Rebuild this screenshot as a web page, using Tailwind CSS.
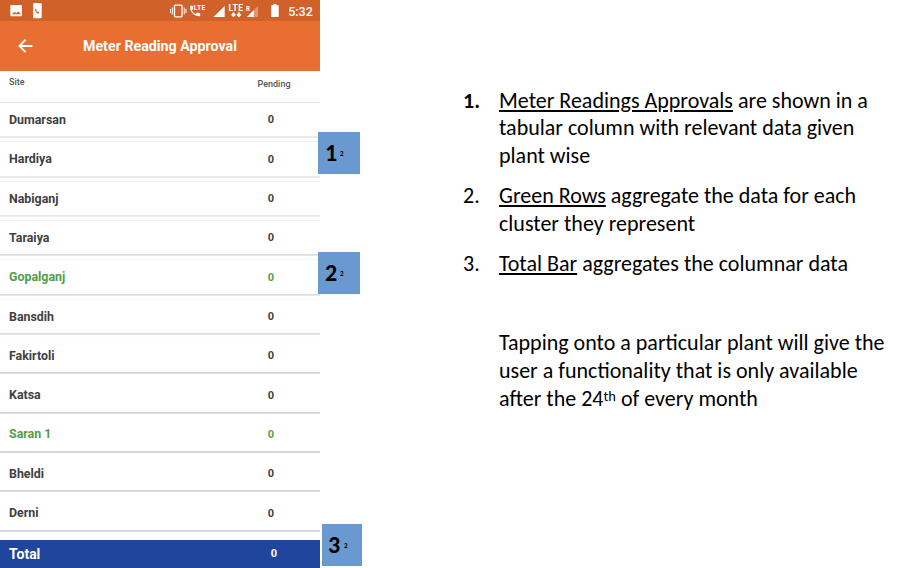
<!DOCTYPE html>
<html lang="en"><head><meta charset="utf-8"><title>Meter Reading Approval</title>
<script src="https://cdn.jsdelivr.net/npm/@tailwindcss/browser@4"></script></head>
<body class="bg-white">
<main class="relative flex h-[568px] w-[904px] overflow-hidden bg-white">
<section class="flex w-[320px] shrink-0 flex-col font-['Roboto',sans-serif] text-[#414141]">
<div class="h-[21px] shrink-0 bg-[#d06229]">
<svg class="block" width="320" height="21" viewBox="0 0 320 21" fill="#fff">
<rect x="10.3" y="5" width="11.7" height="11.3" rx="1.3"/><path d="M12 14.3l2.5-2.6 1.8 1.5 2-2 2.5 3.1z" fill="#d06229"/>
<rect x="33" y="3" width="8.7" height="15.3" rx="1.2"/><path d="M35.1 8.7l1.2.2.3 1.5-.3.7 1.3 1 .8-.4 1 .9-.6 1c-2.3-.1-4.1-2.4-3.7-4.9z" fill="#d06229"/>
<g fill="none" stroke="#fff"><rect x="174.5" y="5.2" width="7.5" height="11.7" rx=".8" stroke-width="1.3"/><path d="M172.3 7.5v7M170.5 9v4M184.2 7.5v7M186 9v4" stroke-width="1"/></g>
<path d="M190 5.7h2.7l.6 3-1.5 1.5c.9 1.7 2.2 3 3.9 3.9l1.5-1.5 3 .6v3c-6.2.2-10.7-4.7-10.2-10.5z"/>
<text x="193.8" y="10" font-size="6.7" font-weight="700" textLength="11.5">LTE</text>
<path d="M213.5 17L224.7 6v11z"/>
<text x="228.5" y="11.2" font-size="8.5" font-weight="700" textLength="14.5">LTE</text>
<path d="M233.5 11.8l2.4 3.2-2.4 2.3-2.4-2.3zM238.9 11.8l2.4 3.2-2.4 2.3-2.4-2.3z"/>
<text x="246" y="11" font-size="6.3" font-weight="700">R</text>
<path d="M247 17L258 6v11z" opacity=".35"/><path d="M247 17l6.7-6.7V17z"/>
<path d="M273.3 4h3.2v1.3h2.2V17h-7.5V5.3h2.1z"/>
<text x="288.3" y="15.5" font-size="12.5" font-weight="500" textLength="24.5">5:32</text>
</svg></div>
<header class="flex h-[50px] shrink-0 items-center bg-[#e86f31] pl-[18px] text-white">
<svg width="15" height="14" viewBox="0 0 15 14" fill="none" stroke="#fff" stroke-width="1.8"><path d="M7.6.7L1.4 7l6.2 6.2M1.4 7h13"/></svg>
<h1 class="ml-[50px] pt-[2px] text-[14.2px] font-bold tracking-[.02px] whitespace-nowrap">Meter Reading Approval</h1></header>
<div class="flex h-[27px] shrink-0 text-[9px] leading-[11px] font-medium text-[#555]"><span class="w-[229px] pt-[6px] pl-[9px]">Site</span><span class="w-[90px] pt-[8px] text-center">Pending</span></div>
<div id="rows" class="h-[433px] shrink-0"></div>
<div class="flex h-[37px] shrink-0 flex-col"><div class="mt-[9px] flex h-[28px] shrink-0 items-center bg-[#20459c] pt-px font-bold text-white"><span class="w-[229px] pl-[9px] text-[14px]">Total</span><span class="w-[90px] text-center text-[11px]">0</span></div></div>
</section>
<article class="pt-[86.6px] pl-[143px] font-['Carlito','Calibri','Lato',sans-serif] text-[22px] leading-[27.8px] whitespace-nowrap text-black">
<ol>
<li class="flex"><span class="w-[36px] shrink-0 font-bold">1.</span><p><u>Meter Readings Approvals</u> are shown in a<br>tabular column with relevant data given<br>plant wise</p></li>
<li class="mt-[12px] flex"><span class="w-[36px] shrink-0">2.</span><p><u>Green Rows</u> aggregate the data for each<br>cluster they represent</p></li>
<li class="mt-[12px] flex"><span class="w-[36px] shrink-0">3.</span><p><u>Total Bar</u> aggregates the columnar data</p></li>
</ol>
<p class="mt-[52px] ml-[36px]">Tapping onto a particular plant will give the<br>user a functionality that is only available<br>after the 24<sup class="top-[-5px] text-[14.5px]">th</sup> of every month</p>
</article>
<div class="absolute top-[132px] left-[318px] flex h-[42px] w-[42px] items-center bg-[#6a99cf] pl-[7px] font-['Carlito','Lato',sans-serif] font-bold text-black"><span class="w-[15px] text-[24px]">1</span><span class="pt-[2px] text-[7px]">2</span></div>
<div class="absolute top-[252px] left-[318px] flex h-[42px] w-[42px] items-center bg-[#6a99cf] pl-[7px] font-['Carlito','Lato',sans-serif] font-bold text-black"><span class="w-[15px] text-[24px]">2</span><span class="pt-[2px] text-[7px]">2</span></div>
<div class="absolute top-[524px] left-[322px] flex h-[42px] w-[40px] items-center bg-[#6a99cf] pl-[6px] font-['Carlito','Lato',sans-serif] font-bold text-black"><span class="w-[16px] text-[24px]">3</span><span class="pt-[2px] text-[7px]">2</span></div>
</main>
<script>
const sites=['Dumarsan','Hardiya','Nabiganj','Taraiya','Gopalganj','Bansdih','Fakirtoli','Katsa','Saran 1','Bheldi','Derni'];
const tops=['#e5e5e5','#efefef','#efefef','#f2f2f2','#f4f4f4','#f8f8f8','#fbfbfb','#fdfdfd','#fff','#fff','#fff'];
document.getElementById('rows').innerHTML=sites.map((s,i)=>`<div class="flex h-[39.33px] flex-col pt-[4px]"><div class="flex h-[35.33px] items-center border-t text-[12.4px] font-bold ${i===4||i===8?'text-[#509e48]':'text-[#414141]'}" style="border-top-color:${tops[i]};box-shadow:0 1px 0 ${i<3?'#ededed':i<6?'#e5e5e5':'#dddddd'}, 0 -1px 0 inset ${i<3?'#e8e8e8':i<6?'#dddddd':'#d3d3d3'}"><span class="w-[226px] pl-[9px]">${s}</span><span class="w-[90px] pt-px text-center text-[11px]">0</span></div></div>`).join('');
</script>
</body></html>
